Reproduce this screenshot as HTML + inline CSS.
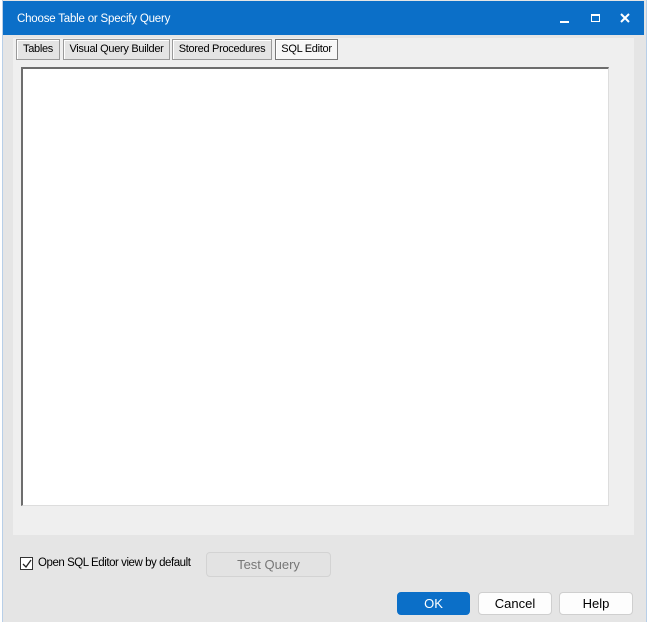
<!DOCTYPE html>
<html><head><style>
body{margin:0;width:649px;height:635px;background:#fff;position:relative;font-family:"Liberation Sans",sans-serif;overflow:hidden}
.a{position:absolute;white-space:nowrap}
.win{left:2px;top:0;width:643px;height:622px;background:#e5e5e5;border-left:1px solid #b8cfe8;border-right:1px solid #b8cfe8}
.title{left:3px;top:1px;width:641px;height:34px;background:#0b6fc8;color:#fff;font-size:11.5px;letter-spacing:-0.2px}
.tab{top:39px;height:19px;background:#e4e4e4;border:1px solid #9a9a9a;box-shadow:inset 1px 1px #fff;font-size:11px;letter-spacing:-0.3px;line-height:19px;text-align:center;color:#000}
.btn{height:21px;border:1px solid #cfcfcf;border-radius:4px;background:#fdfdfd;font-size:13px;text-align:center;line-height:21px}
</style></head><body>
<div class="a win"></div>
<div class="a title"><span class="a" style="left:14px;top:12px">Choose Table or Specify Query</span>
<div class="a" style="left:557px;top:20px;width:9px;height:2px;background:#fff"></div>
<div class="a" style="left:588px;top:13px;width:7px;height:5px;border:1px solid #fff;border-top-width:2px"></div>
<svg class="a" style="left:617px;top:12px" width="10" height="10"><path d="M1 1L9 9M9 1L1 9" stroke="#fff" stroke-width="2"/></svg>
</div>
<div class="a" style="left:13px;top:38px;width:621px;height:497px;background:#efefef"></div>
<div class="a tab" style="left:16px;width:42px">Tables</div>
<div class="a tab" style="left:63px;width:105px">Visual Query Builder</div>
<div class="a tab" style="left:172px;width:98px">Stored Procedures</div>
<div class="a tab" style="left:275px;width:61px;background:#f7f7f7;border-color:#777">SQL Editor</div>
<div class="a" style="left:21px;top:67px;width:585px;height:436px;background:#fff;border-top:2px solid #6d6d6d;border-left:2px solid #6d6d6d;border-right:1px solid #ddd;border-bottom:1px solid #ddd"></div>
<div class="a" style="left:20px;top:557px;width:11px;height:11px;border:1px solid #333;background:#fff"></div>
<svg class="a" style="left:21px;top:558px" width="12" height="12"><path d="M2 6L5 9L10 2" stroke="#222" stroke-width="1.3" fill="none"/></svg>
<span class="a" style="left:38px;top:557px;font-size:11.5px;letter-spacing:-0.45px">Open SQL Editor view by default</span>
<div class="a btn" style="left:206px;top:552px;width:123px;height:23px;line-height:23px;background:#e3e3e3;color:#777;border-color:#d3d3d3">Test Query</div>
<div class="a btn" style="left:397px;top:592px;width:71px;background:#0b6fc8;color:#fff;border-color:#0b6fc8">OK</div>
<div class="a btn" style="left:478px;top:592px;width:72px">Cancel</div>
<div class="a btn" style="left:559px;top:592px;width:72px">Help</div>
</body></html>
